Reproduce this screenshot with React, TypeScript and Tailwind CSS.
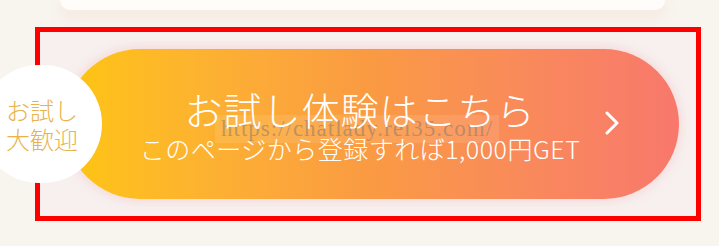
export default function App() {
  return (
    <div className="relative h-[246px] w-[719px] overflow-hidden bg-[#f8f4ee] font-['Noto_Sans_CJK_JP','Noto_Sans',sans-serif]">
      {/* top card peeking in */}
      <div className="ml-[60px] h-[10px] w-[605px] rounded-b-[14px] bg-[#fffcfa] shadow-[0_6px_14px_rgba(240,190,170,0.25)]" />

      {/* highlighted area */}
      <div className="ml-[35px] mt-[17px] h-[194px] w-[666px] border-[5px] border-[#ff0000] bg-[#f7f0ef] pl-[25px] pr-[17px] pt-[17px]">
        <div className="relative flex h-[150px] w-full items-center rounded-full bg-gradient-to-r from-[#fec50c] via-[#fa9a43] to-[#f8786c] shadow-[0_0_12px_rgba(240,150,150,0.35)]">
          {/* watermark */}
          <div className="absolute left-[150px] top-[66px] bg-white/10 px-[6px] font-['Liberation_Serif',serif] text-[23px] leading-[28px] tracking-[1px] text-[#8a7a6a]/55">
            https://chatlady.rei35.com/
          </div>
          <div className="relative flex flex-1 flex-col items-center pl-[50px] text-white">
            <div className="text-[38px] font-light leading-[46px] tracking-[1px]">お試し体験はこちら</div>
            <div className="mt-[1px] text-[25px] font-light leading-[30px] tracking-[0.5px]">このページから登録すれば1,000円GET</div>
          </div>
          <svg width="14" height="24" viewBox="0 0 14 24" className="mr-[60px] mb-[3px]">
            <path d="M2 2 L12 12 L2 22" fill="none" stroke="white" strokeWidth="3" strokeLinecap="round" strokeLinejoin="round" />
          </svg>
        </div>
      </div>

      {/* badge circle */}
      <div className="absolute left-[-20px] top-[65px] flex h-[118px] w-[122px] items-center justify-center rounded-full bg-white pl-[2px]">
        <div className="text-center text-[24px] font-light leading-[29px] text-[#e8b24c]">
          お試し
          <br />
          大歓迎
        </div>
      </div>
    </div>
  )
}
